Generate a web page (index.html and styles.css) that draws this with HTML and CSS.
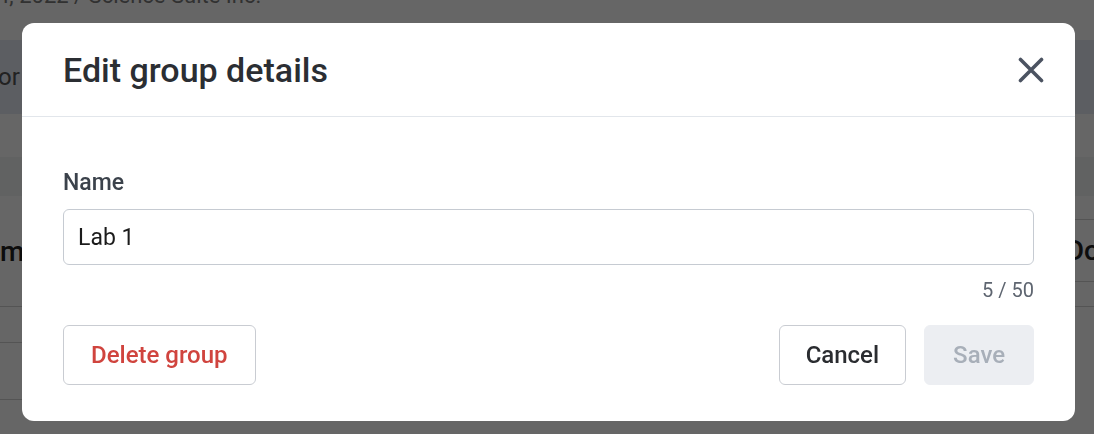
FILE: index.html
```html
<!DOCTYPE html>
<html lang="en">
<head>
<meta charset="utf-8">
<title>Edit group details</title>
<link rel="stylesheet" href="styles.css">
</head>
<body>
<div class="page">
  <div class="crumb">4, 2022 / Science Suite Inc.</div>
  <div class="toolbar"><span class="tool-text">or</span></div>
  <div class="spacer"></div>
  <div class="thead"></div>
  <div class="tbody">
    <div class="col-left">
      <div class="cell tall"><span class="big">m</span></div>
      <div class="cell mid"></div>
      <div class="cell low"></div>
    </div>
    <div class="col-right">
      <div class="cell r1"></div>
      <div class="cell r2"><span class="big">Do</span></div>
      <div class="cell r3"></div>
    </div>
  </div>
</div>

<div class="overlay">
  <div class="modal" role="dialog" aria-labelledby="modal-title">
    <div class="modal-header">
      <h2 id="modal-title" class="modal-title">Edit group details</h2>
      <button class="close-btn" aria-label="Close">
        <svg width="26" height="26" viewBox="0 0 26 26" fill="none" stroke="currentColor" stroke-width="3.6" stroke-linecap="round">
          <path d="M2.5 2.5 L23.5 23.5 M23.5 2.5 L2.5 23.5"/>
        </svg>
      </button>
    </div>
    <div class="modal-body">
      <label class="field-label" for="name">Name</label>
      <input id="name" class="text-input" type="text" value="Lab 1">
      <div class="counter">5 / 50</div>
      <div class="actions">
        <button class="btn btn-danger">Delete group</button>
        <div class="actions-right">
          <button class="btn btn-outline">Cancel</button>
          <button class="btn btn-disabled" disabled>Save</button>
        </div>
      </div>
    </div>
  </div>
</div>
</body>
</html>
```

FILE: styles.css
```css
* { box-sizing: border-box; }
html, body { margin: 0; padding: 0; }
body {
  width: 1094px;
  height: 434px;
  overflow: hidden;
  font-family: Roboto, "Liberation Sans", Arial, sans-serif;
  background: #ffffff;
}

/* underlying page */
.page {
  display: flex;
  flex-direction: column;
  width: 1094px;
  height: 434px;
  overflow: hidden;
}
.crumb {
  flex: none;
  height: 57px;
  margin-top: -17px;
  margin-left: -3px;
  font-size: 22px;
  line-height: 26px;
  color: #7a7a7a;
}
.toolbar {
  flex: none;
  height: 74px;
  background: #e6ebf4;
  display: flex;
  align-items: center;
  font-size: 24px;
  color: #555;
}
.tool-text { margin-left: -2px; }
.spacer { height: 43px; flex: none; }
.thead { height: 39px; background: #f3f4f6; flex: none; }
.tbody {
  display: flex;
  justify-content: space-between;
  flex: 1;
}
.col-left, .col-right { display: flex; flex-direction: column; width: 60px; }
.cell { border-bottom: 1px solid #d2d2d2; display: flex; align-items: center; }
.tall { height: 111px; }
.mid { height: 36px; }
.low { height: 57px; }
.r1 { height: 24px; }
.r2 { height: 62px; justify-content: flex-end; }
.r3 { height: 25px; }
.big { font-size: 28px; font-weight: 500; color: #222; }
.col-right .big { margin-right: -6px; }

/* overlay + modal */
.overlay {
  position: fixed;
  inset: 0;
  background: rgba(0, 0, 0, 0.6);
  padding: 23px 0 0 22px;
}
.modal {
  width: 1053px;
  height: 398px;
  background: #ffffff;
  border-radius: 12px;
  display: flex;
  flex-direction: column;
}
.modal-header {
  flex: none;
  height: 94px;
  border-bottom: 1px solid #e2e6eb;
  display: flex;
  align-items: center;
  justify-content: space-between;
  padding: 0 31px 0 41px;
}
.modal-title {
  margin: 0;
  font-size: 34px;
  font-weight: 500;
  color: #2b2e33;
}
.close-btn {
  border: 0;
  background: none;
  padding: 0;
  width: 26px;
  height: 26px;
  color: #4b5361;
  display: flex;
  cursor: pointer;
}
.modal-body {
  padding: 52px 41px 36px 41px;
  display: flex;
  flex-direction: column;
}
.field-label {
  font-size: 23px;
  line-height: 28px;
  font-weight: 500;
  color: #3b424b;
}
.text-input {
  margin-top: 12px;
  height: 56px;
  width: 100%;
  border: 1px solid #c6cbd2;
  border-radius: 6px;
  padding: 0 14px;
  font-family: inherit;
  font-size: 23px;
  color: #1b1b1b;
  outline: none;
}
.counter {
  margin-top: 13px;
  text-align: right;
  font-size: 20px;
  line-height: 24px;
  color: #5e6570;
}
.actions {
  margin-top: 23px;
  display: flex;
  justify-content: space-between;
}
.actions-right { display: flex; gap: 18px; }
.btn {
  height: 60px;
  padding: 0 27px;
  border-radius: 6px;
  font-family: inherit;
  font-size: 24px;
  font-weight: 500;
  background: #ffffff;
  border: 1px solid #c9ccd2;
}
.btn-danger { color: #d0443e; }
.btn-outline { color: #2a2c30; padding: 0 26px; }
.btn-disabled {
  padding: 0 28px;
  background: #eceef2;
  border-color: #eceef2;
  color: #a8afb9;
}
```
